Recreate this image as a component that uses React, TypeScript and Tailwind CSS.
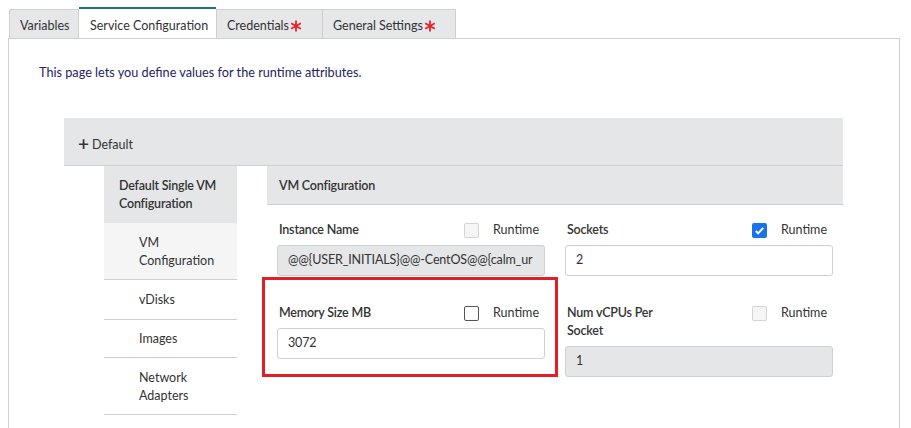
import React from "react";

const font = { fontFamily: "Lato, 'Open Sans', sans-serif" };

function Star() {
  return (
    <svg width="12" height="12" viewBox="0 0 12 12" className="inline-block ml-[1px]">
      <g stroke="#e8202a" strokeWidth="1.8" strokeLinecap="butt">
        <line x1="6" y1="0.5" x2="6" y2="11.5" />
        <line x1="1.2" y1="3.2" x2="10.8" y2="8.8" />
        <line x1="1.2" y1="8.8" x2="10.8" y2="3.2" />
      </g>
    </svg>
  );
}

function Checkbox({ state }: { state: "off" | "disabled" | "on" }) {
  if (state === "on") {
    return (
      <span className="w-[15px] h-[15px] rounded-[2px] bg-[#1a73e8] flex items-center justify-center">
        <svg width="11" height="11" viewBox="0 0 12 12">
          <path d="M2 6.5l2.6 2.6L10 3.2" fill="none" stroke="#fff" strokeWidth="2.2" />
        </svg>
      </span>
    );
  }
  return (
    <span
      className={`w-[15px] h-[15px] rounded-[2px] border ${
        state === "off" ? "border-[#555] bg-white" : "border-[#d4d4d4] bg-[#f6f6f6]"
      }`}
    />
  );
}

function Field({
  label,
  value,
  check,
  disabled,
}: {
  label: React.ReactNode;
  value: string;
  check: "off" | "disabled" | "on";
  disabled?: boolean;
}) {
  return (
    <div className="flex flex-col">
      <div className="flex items-start justify-between pl-[2px] pr-[6px]">
        <div className="font-semibold text-[12.5px] tracking-[-0.2px] leading-[18px] text-[#333]">{label}</div>
        <div className="flex items-center gap-[14px] h-[18px]">
          <Checkbox state={check} />
          <span className="text-[12.5px] text-[#333]">Runtime</span>
        </div>
      </div>
      <div
        className={`mt-[6px] h-[31px] border border-[#cfcfcf] rounded-[3px] flex items-center px-[10px] text-[12.5px] tracking-[-0.15px] text-[#333] whitespace-nowrap overflow-hidden ${
          disabled ? "bg-[#e5e6e8]" : "bg-white"
        }`}
      >
        {value}
      </div>
    </div>
  );
}

export default function App() {
  return (
    <div className="w-[911px] h-[428px] bg-white overflow-hidden text-[#333]" style={font}>
      {/* Tabs */}
      <div className="flex items-end pl-[9px] pt-[7px] h-[38px] text-[12.5px]">
        <div className="w-[70px] h-[29px] pl-[10px] pt-[4px] flex items-center bg-[#e6e7e9] border border-b-0 border-[#cfcfcf]">
          Variables
        </div>
        <div className="w-[137px] h-[31px] pl-[11px] pt-[5px] flex items-center bg-white border-t-[2px] border-[#1d7a68]">
          Service Configuration
        </div>
        <div className="w-[107px] h-[29px] pl-[10px] pt-[4px] flex items-center bg-[#e6e7e9] border border-b-0 border-[#cfcfcf]">
          Credentials
          <Star />
        </div>
        <div className="w-[133px] h-[29px] pl-[10px] pt-[4px] flex items-center bg-[#e6e7e9] border border-b-0 border-l-0 border-[#cfcfcf]">
          General Settings
          <Star />
        </div>
      </div>

      {/* Panel */}
      <div className="ml-[8px] w-[892px] h-[400px] border border-b-0 border-[#cfcfcf]">
        <p className="pl-[30px] pt-[24px] text-[12.7px] text-[#262262]">
          This page lets you define values for the runtime attributes.
        </p>

        <div className="ml-[55px] mr-[56px] mt-[36px]">
          <div className="h-[48px] bg-[#e5e6e8] border-b border-[#d0d0d0] flex items-center pl-[14px] pt-[7px] text-[12.5px]">
            <span className="text-[19px] font-semibold leading-none mr-[3px] -mt-[4px]">+</span>
            Default
          </div>

          <div className="flex pl-[40px]">
            {/* Left nav */}
            <div className="w-[133px] text-[12.5px] leading-[18px]">
              <div className="bg-[#e5e6e8] pl-[15px] pt-[11px] h-[57px] font-semibold tracking-[-0.2px]">
                Default Single VM Configuration
              </div>
              <div className="bg-[#f5f5f5] pl-[35px] pt-[11px] h-[57px] border-b border-[#cfcfcf]">
                VM Configuration
              </div>
              <div className="pl-[35px] h-[40px] flex items-center border-b border-[#cfcfcf]">vDisks</div>
              <div className="pl-[35px] h-[38px] flex items-center border-b border-[#cfcfcf]">Images</div>
              <div className="pl-[35px] pt-[11px] h-[57px] border-b border-[#cfcfcf]">Network Adapters</div>
            </div>

            {/* Right content */}
            <div className="flex-1 ml-[30px]">
              <div className="h-[39px] bg-[#e5e6e8] border-b border-[#cfcfcf] flex items-center pl-[12px] pt-[2px] text-[12.5px] font-semibold tracking-[-0.2px]">
                VM Configuration
              </div>
              <div className="grid grid-cols-2 gap-x-[20px] px-[10px] pt-[16px]">
                <Field label="Instance Name" value="@@{USER_INITIALS}@@-CentOS@@{calm_ur" check="disabled" disabled />
                <Field label="Sockets" value="2" check="on" />
                <div className="relative mt-[28px] self-start">
                  <div className="absolute -left-[15px] -right-[13px] -top-[27px] -bottom-[18px] border-[3px] border-[#e31e24]" />
                  <Field label="Memory Size MB" value="3072" check="off" />
                </div>
                <div className="mt-[28px]">
                  <Field
                    label={
                      <>
                        Num vCPUs Per
                        <br />
                        Socket
                      </>
                    }
                    value="1"
                    check="disabled"
                    disabled
                  />
                </div>
              </div>
            </div>
          </div>
        </div>
      </div>
    </div>
  );
}
